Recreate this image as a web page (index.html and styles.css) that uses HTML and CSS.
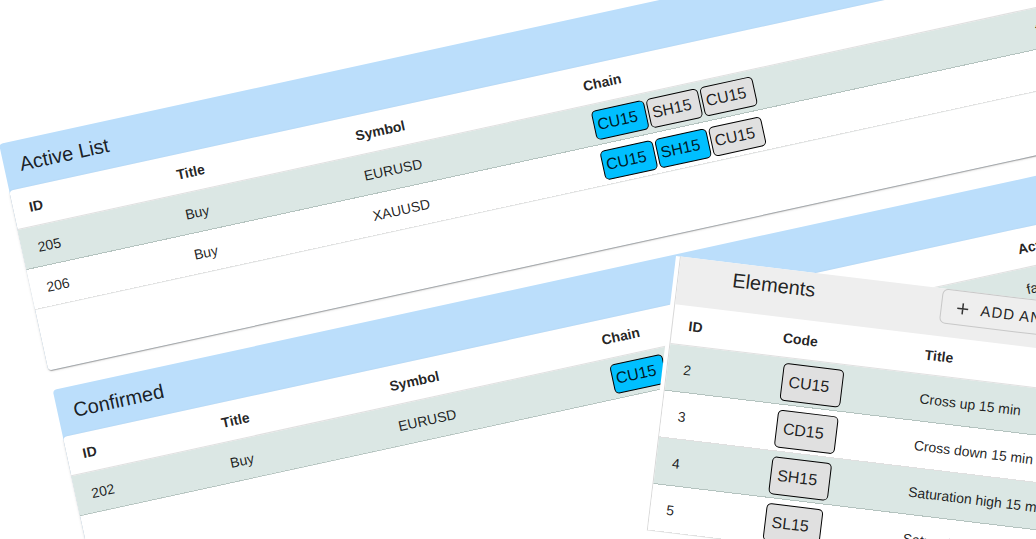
FILE: index.html
```html
<!DOCTYPE html>
<html lang="en">
<head>
<meta charset="utf-8">
<title>Signals</title>
<link rel="stylesheet" href="styles.css">
</head>
<body>
<main class="stage">
  <div class="lists">
    <section class="panel">
      <h2 class="panel-title">Active List</h2>
      <div class="paper paper-active">
        <table class="grid">
          <colgroup><col class="a-id"><col class="a-title"><col class="a-symbol"><col class="a-chain"><col></colgroup>
          <thead><tr><th>ID</th><th>Title</th><th>Symbol</th><th>Chain</th><th>Active</th></tr></thead>
          <tbody>
            <tr><td>205</td><td>Buy</td><td>EURUSD</td><td><div class="chain"><span class="chip on">CU15</span><span class="chip">SH15</span><span class="chip">CU15</span></div></td><td>true</td></tr>
            <tr><td>206</td><td>Buy</td><td>XAUUSD</td><td><div class="chain"><span class="chip on">CU15</span><span class="chip on">SH15</span><span class="chip">CU15</span></div></td><td>true</td></tr>
          </tbody>
        </table>
      </div>
    </section>
    <section class="panel">
      <h2 class="panel-title">Confirmed</h2>
      <div class="paper paper-confirmed">
        <table class="grid">
          <colgroup><col class="c-id"><col class="c-title"><col class="c-symbol"><col class="c-chain"><col></colgroup>
          <thead><tr><th>ID</th><th>Title</th><th>Symbol</th><th>Chain</th><th>Active</th></tr></thead>
          <tbody>
            <tr><td>202</td><td>Buy</td><td>EURUSD</td><td><div class="chain"><span class="chip on">CU15</span></div></td><td>false</td></tr>
          </tbody>
        </table>
      </div>
    </section>
  </div>

  <section class="elements">
    <div class="sheet">
      <header class="elements-head">
        <h2 class="elements-title">Elements</h2>
        <button class="add" type="button">
          <svg class="plus" viewBox="0 0 20 20" aria-hidden="true"><path d="M10 4.500v11M4.500 10h11"/></svg>
          ADD AN ELEMENT
        </button>
      </header>
      <table class="grid roomy">
        <colgroup><col class="e-id"><col class="e-code"><col></colgroup>
        <thead><tr><th>ID</th><th>Code</th><th>Title</th></tr></thead>
        <tbody>
          <tr><td>2</td><td><span class="chip large">CU15</span></td><td>Cross up 15 min</td></tr>
          <tr><td>3</td><td><span class="chip large">CD15</span></td><td>Cross down 15 min</td></tr>
          <tr><td>4</td><td><span class="chip large">SH15</span></td><td>Saturation high 15 min</td></tr>
          <tr><td>5</td><td><span class="chip large">SL15</span></td><td>Saturation low 15 min</td></tr>
        </tbody>
      </table>
    </div>
  </section>
</main>
</body>
</html>
```
FILE: styles.css
```css
* { box-sizing: border-box; }
body {
  margin: 0;
  background: #fff;
  color: rgba(0, 0, 0, .87);
  font: 14px/20px "Liberation Sans", Arial, sans-serif;
}
.stage {
  position: relative;
  height: 100vh;
  overflow: hidden;
}

/* Tilted boards on the free canvas */
.lists {
  position: absolute;
  left: -1px;
  top: 144px;
  width: 125vw;
  display: flex;
  flex-direction: column;
  gap: 20px;
  transform: rotate(-12.3deg);
  transform-origin: 0 0;
}
.elements {
  position: absolute;
  left: 676px;
  top: 256px;
  width: 60vw;
  padding-left: 4px;
  background: #fff;
  transform: rotate(6.9deg);
  transform-origin: 0 0;
}

.panel {
  background: #bbdefb;
  border-radius: 4px;
}
.panel-title {
  margin: 0;
  padding: 8px 16px;
  font-size: 20px;
  font-weight: 400;
  line-height: 32px;
}
.paper {
  background: #fff;
  border-radius: 4px;
  box-shadow: 0 2px 1px -1px rgba(0, 0, 0, .2), 0 1px 1px rgba(0, 0, 0, .14), 0 1px 3px rgba(0, 0, 0, .12);
}
.paper-active { min-height: 184px; }
.paper-confirmed { min-height: 400px; }

/* Stripes and rules are painted on the whole table, so tilted cells show no seams */
.grid {
  --head: 40px;
  --row: 41px;
  width: 100%;
  table-layout: fixed;
  border-collapse: separate;
  border-spacing: 0;
  background:
    linear-gradient(#e0e0e0, #e0e0e0) 0 calc(var(--head) - 1px) / 100% 1px no-repeat,
    repeating-linear-gradient(
      #dbe7e4 0 calc(var(--row) - 1px),
      #b4c3bf calc(var(--row) - 1px) var(--row),
      #fff var(--row) calc(var(--row) * 2 - 1px),
      #e0e0e0 calc(var(--row) * 2 - 1px) calc(var(--row) * 2)
    ) 0 var(--head) no-repeat;
}
.grid th, .grid td {
  padding: 0 16px;
  text-align: left;
  white-space: nowrap;
}
.grid th { height: var(--head); font-weight: 700; }
.grid td { height: var(--row); }
.roomy { --row: 47px; }

.a-id { width: 151px; }
.a-title { width: 183px; }
.a-symbol { width: 233px; }
.a-chain { width: 454px; }
.c-id { width: 142px; }
.c-title { width: 172px; }
.c-symbol { width: 217px; }
.c-chain { width: 426px; }
.e-id { width: 95px; }
.e-code { width: 143px; }

.chain { display: flex; gap: 2px; padding-left: 2px; }
.chip {
  display: inline-block;
  padding: 4px 8px 4px 3px;
  border: 1px solid #000;
  border-radius: 5px;
  background: #e0e0e0;
  font-size: 16px;
  line-height: 20px;
}
.chip.on { background: #00bfff; }
.chip.large {
  display: block;
  width: fit-content;
  margin-left: 4px;
  padding: 8px 12px 8px 6px;
}

.sheet { border-left: 1px solid #d8d8d8; }
.elements-head {
  display: flex;
  align-items: flex-start;
  padding: 0 0 13px 54px;
  background: #eee;
}
.elements-title {
  flex: 0 0 210px;
  margin: 0;
  font-size: 20px;
  font-weight: 400;
  line-height: 34px;
}
.add {
  display: flex;
  align-items: center;
  gap: 8px;
  height: 35px;
  padding: 0 11px;
  border: 1px solid #c8c8c8;
  border-radius: 6px;
  background: #eee;
  color: inherit;
  font: 15px/20px "Liberation Sans", Arial, sans-serif;
  letter-spacing: 1px;
  white-space: nowrap;
}
.plus {
  width: 20px;
  height: 20px;
  fill: none;
  stroke: #333;
  stroke-width: 1.5;
}
```
